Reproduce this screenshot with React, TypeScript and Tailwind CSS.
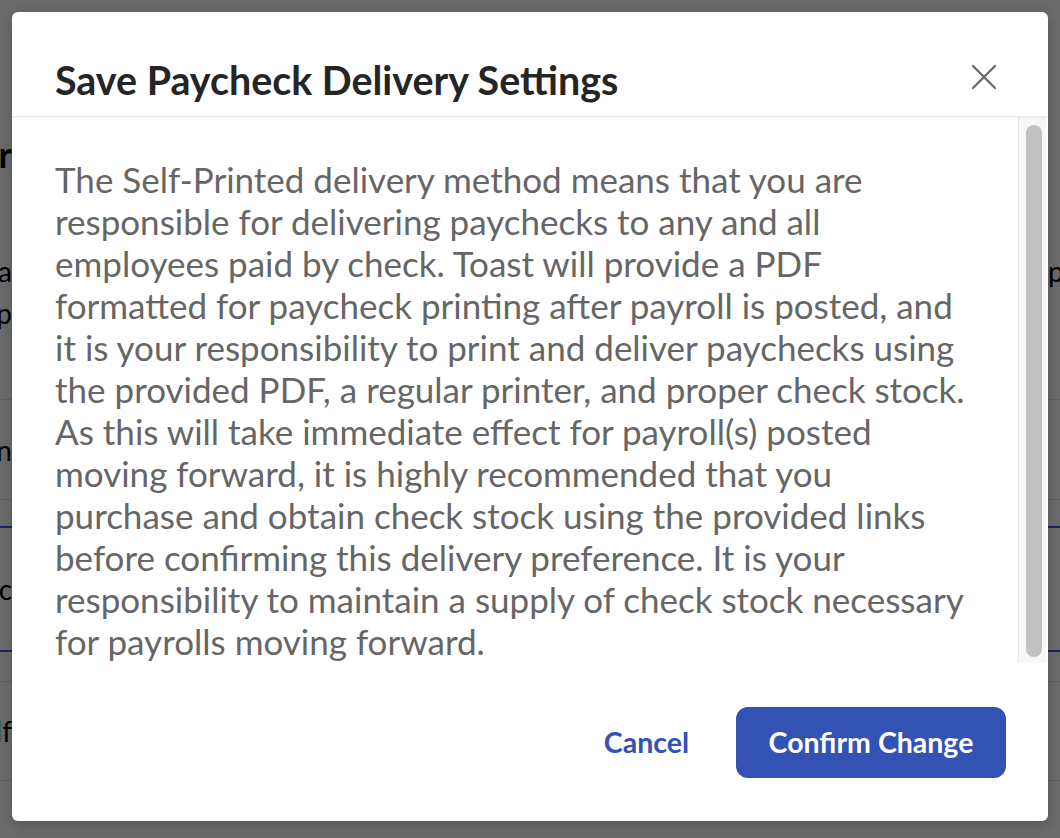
const lines = [
  'The Self-Printed delivery method means that you are',
  'responsible for delivering paychecks to any and all',
  'employees paid by check. Toast will provide a PDF',
  'formatted for paycheck printing after payroll is posted, and',
  'it is your responsibility to print and deliver paychecks using',
  'the provided PDF, a regular printer, and proper check stock.',
  'As this will take immediate effect for payroll(s) posted',
  'moving forward, it is highly recommended that you',
  'purchase and obtain check stock using the provided links',
  'before confirming this delivery preference. It is your',
  'responsibility to maintain a supply of check stock necessary',
  'for payrolls moving forward.',
];

function PageRow({ left, right, className }: { left?: string; right?: string; className: string }) {
  return (
    <div className={`flex items-center justify-between ${className}`}>
      <div className="flex w-[12px] justify-end overflow-hidden whitespace-nowrap">{left}</div>
      <div className="w-[12px] overflow-hidden whitespace-nowrap">{right}</div>
    </div>
  );
}

export default function App() {
  return (
    <div className="relative h-[838px] w-[1060px] overflow-hidden bg-white font-['Lato',sans-serif] text-black">
      {/* Page behind the dialog */}
      <div className="flex flex-col">
        <div className="h-[128px]" />
        <PageRow className="h-[52px] text-[36px] font-bold" left="Paycheck Deliver" />
        <div className="h-[70px]" />
        <PageRow className="h-[42px] text-[28px]" left="Toast pa" right="pe" />
        <PageRow className="h-[42px] text-[28px]" left="with p" />
        <div className="h-[66px] border-b border-[#e5e5e5]" />
        <PageRow className="h-[100px] border-b border-[#e5e5e5] text-[28px]" left="Compan" />
        <div className="h-[28px] border-b-2 border-[#3b5be0]" />
        <PageRow className="h-[124px] border-b-2 border-[#3b5be0] text-[28px]" left="Selec" />
        <div className="h-[30px] border-b border-[#e5e5e5]" />
        <PageRow className="h-[99px] border-b border-[#e5e5e5] text-[28px]" left="Self" />
      </div>

      {/* Overlay */}
      <div className="absolute inset-0 bg-black/[0.58]" />

      {/* Dialog */}
      <div className="absolute left-[12px] top-[12px] flex h-[809px] w-[1036px] flex-col overflow-hidden rounded-[6px] bg-white shadow-[0_4px_16px_rgba(0,0,0,0.2)]">
        {/* Header */}
        <div className="relative z-10 flex h-[105px] shrink-0 items-start justify-between border-b border-[#e8e8e8] pl-[43px] pr-[51px] pt-[44px] shadow-[0_1px_3px_rgba(0,0,0,0.06)]">
          <h2 className="text-[39.4px] font-bold leading-[48px] text-[#252525]">Save Paycheck Delivery Settings</h2>
          <button className="mt-[8px] text-[#666666]">
            <svg width="26" height="26" viewBox="0 0 26 26" fill="none" stroke="currentColor" strokeWidth="2.2" strokeLinecap="round">
              <path d="M2 2L24 24M24 2L2 24" />
            </svg>
          </button>
        </div>

        {/* Body with scrollbar */}
        <div className="mr-[2px] flex h-[546px] shrink-0">
          <div className="flex-1 overflow-hidden">
            <p className="whitespace-nowrap pl-[43px] pt-[41px] text-[35px] leading-[42px] text-[#666666]">
              {lines.map((line, i) => (
                <span key={i}>
                  {line}
                  {i < lines.length - 1 && <br />}
                </span>
              ))}
            </p>
          </div>
          <div className="flex w-[28px] shrink-0 border-l border-[#e8e8e8] bg-[#f7f7f7] pb-[6px] pl-[7px] pr-[4px] pt-[8px]">
            <div className="flex-1 rounded-full bg-[#c1c1c1]" />
          </div>
        </div>

        {/* Footer */}
        <div className="flex flex-1 items-center justify-end gap-[47px] pr-[42px]">
          <button className="text-[28.5px] font-bold text-[#3452b4]">Cancel</button>
          <button className="h-[71px] w-[270px] rounded-[12px] bg-[#3452b4] text-[28.5px] font-bold text-white">
            Confirm Change
          </button>
        </div>
      </div>
    </div>
  );
}
